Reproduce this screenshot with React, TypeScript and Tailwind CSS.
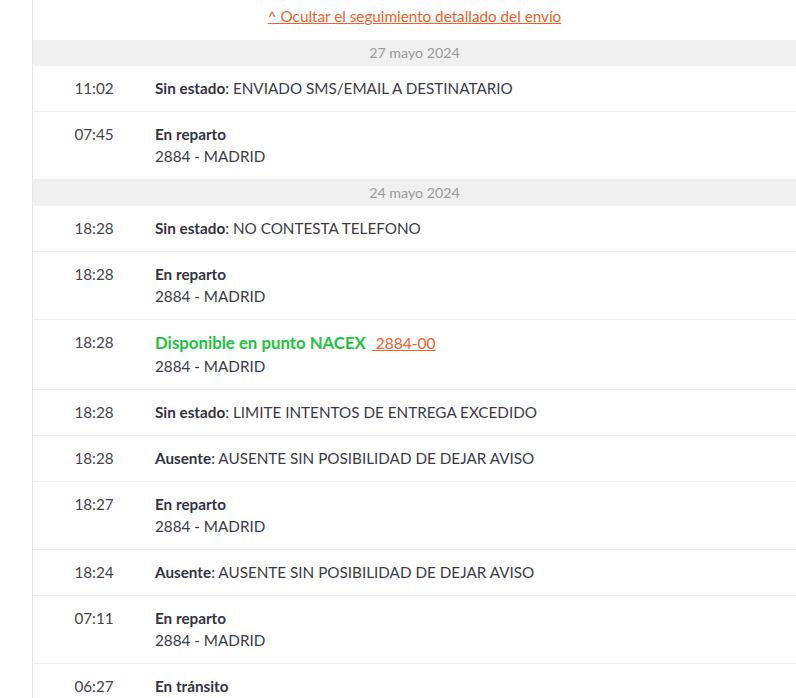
type Entry = {
  time: string;
  label: string;
  detail?: string;
  sub?: string;
  available?: boolean;
};

type Day = { date: string; entries: Entry[] };

const days: Day[] = [
  {
    date: "27 mayo 2024",
    entries: [
      { time: "11:02", label: "Sin estado", detail: "ENVIADO SMS/EMAIL A DESTINATARIO" },
      { time: "07:45", label: "En reparto", sub: "2884 - MADRID" },
    ],
  },
  {
    date: "24 mayo 2024",
    entries: [
      { time: "18:28", label: "Sin estado", detail: "NO CONTESTA TELEFONO" },
      { time: "18:28", label: "En reparto", sub: "2884 - MADRID" },
      { time: "18:28", label: "Disponible en punto NACEX", sub: "2884 - MADRID", available: true },
      { time: "18:28", label: "Sin estado", detail: "LIMITE INTENTOS DE ENTREGA EXCEDIDO" },
      { time: "18:28", label: "Ausente", detail: "AUSENTE SIN POSIBILIDAD DE DEJAR AVISO" },
      { time: "18:27", label: "En reparto", sub: "2884 - MADRID" },
      { time: "18:24", label: "Ausente", detail: "AUSENTE SIN POSIBILIDAD DE DEJAR AVISO" },
      { time: "07:11", label: "En reparto", sub: "2884 - MADRID" },
      { time: "06:27", label: "En tránsito", sub: "2884 - MADRID" },
    ],
  },
];

function Row({ entry }: { entry: Entry }) {
  return (
    <div className="flex border-b border-[#ececec] pt-[11px] pb-3 text-[15.25px] leading-[22px] text-[#3b3b45]">
      <div className="w-[122px] shrink-0 text-center text-[#44444c]">{entry.time}</div>
      <div className="flex-1">
        {entry.available ? (
          <div className="text-[16.8px] leading-[24px]">
            <span className="font-bold text-[#1dc43d]">{entry.label}</span>
            <a href="#" className="ml-[6px] text-[15.5px] text-[#f2612a] underline">
              {"\u00a02884-00"}
            </a>
          </div>
        ) : (
          <div>
            <span className="font-bold text-[#33333f]">{entry.label}</span>
            {entry.detail && <span>: {entry.detail}</span>}
          </div>
        )}
        {entry.sub && <div>{entry.sub}</div>}
      </div>
    </div>
  );
}

export default function App() {
  return (
    <div
      className="h-[698px] overflow-hidden bg-white pl-8"
      style={{ fontFamily: "Lato, 'Open Sans', sans-serif" }}
    >
      <div className="h-full border-l border-[#e6e6e6]">
        <div className="flex h-10 items-start justify-center pt-[5px]">
          <a href="#" className="text-[15.25px] leading-[22px] text-[#f2612a] underline">
            ^ Ocultar el seguimiento detallado del envío
          </a>
        </div>
        {days.map((day) => (
          <div key={day.date}>
            <div className="h-[26px] bg-[#f0f0f0] text-center text-[14.25px] leading-[26px] text-[#9a9a9a]">
              {day.date}
            </div>
            {day.entries.map((e, i) => (
              <Row key={i} entry={e} />
            ))}
          </div>
        ))}
      </div>
    </div>
  );
}
